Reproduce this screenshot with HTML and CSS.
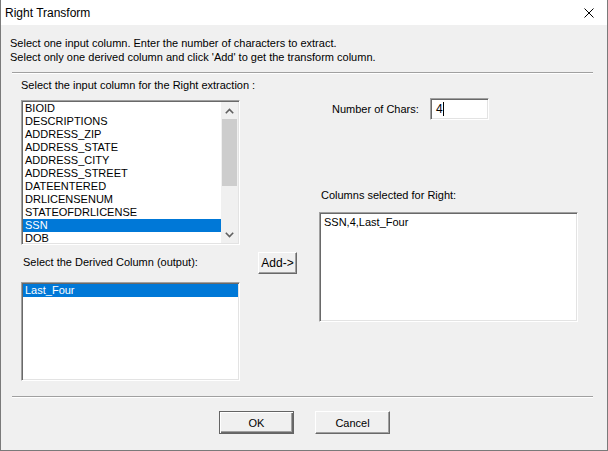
FILE: index.html
```html
<!DOCTYPE html>
<html>
<head>
<meta charset="utf-8">
<title>Right Transform</title>
<link rel="stylesheet" href="styles.css">
</head>
<body>
<div class="window">
  <div class="titlebar">
    <span class="title">Right Transform</span>
    <svg class="close" width="10" height="10" viewBox="0 0 10 10"><path d="M0.5 0.5L9.5 9.5M9.5 0.5L0.5 9.5" stroke="#000" stroke-width="1" fill="none"/></svg>
  </div>
  <div class="client">
    <div class="intro">
      <div>Select one input column. Enter the number of characters to extract.</div>
      <div>Select only one derived column and click 'Add' to get the transform column.</div>
    </div>
    <div class="sep"></div>
    <div class="main">
      <div class="col-left">
        <div class="label">Select the input column for the Right extraction :</div>
        <div class="listbox input-list">
          <ul class="items">
            <li>BIOID</li>
            <li>DESCRIPTIONS</li>
            <li>ADDRESS_ZIP</li>
            <li>ADDRESS_STATE</li>
            <li>ADDRESS_CITY</li>
            <li>ADDRESS_STREET</li>
            <li>DATEENTERED</li>
            <li>DRLICENSENUM</li>
            <li>STATEOFDRLICENSE</li>
            <li class="sel">SSN</li>
            <li>DOB</li>
          </ul>
          <div class="scrollbar">
            <div class="sb-btn"><svg width="9" height="6" viewBox="0 0 9 6"><path d="M0.8 5.2L4.5 1.5L8.2 5.2" stroke="#606060" stroke-width="1.6" fill="none"/></svg></div>
            <div class="sb-track"><div class="sb-thumb"></div></div>
            <div class="sb-btn"><svg width="9" height="6" viewBox="0 0 9 6"><path d="M0.8 0.8L4.5 4.5L8.2 0.8" stroke="#606060" stroke-width="1.6" fill="none"/></svg></div>
          </div>
        </div>
        <div class="label derived-label">Select the Derived Column (output):</div>
        <div class="listbox derived-list">
          <ul class="items">
            <li class="sel">Last_Four</li>
          </ul>
        </div>
      </div>
      <div class="col-mid">
        <button class="btn add">Add-&gt;</button>
      </div>
      <div class="col-right">
        <div class="chars-row">
          <span class="chars-label">Number of Chars:</span>
          <div class="textbox chars">4<span class="caret"></span></div>
        </div>
        <div class="label right-label">Columns selected for Right:</div>
        <div class="textbox result">SSN,4,Last_Four</div>
      </div>
    </div>
    <div class="sep"></div>
    <div class="buttons">
      <button class="btn default">OK</button>
      <button class="btn cancel">Cancel</button>
    </div>
  </div>
</div>
</body>
</html>
```
FILE: styles.css
```css
* { box-sizing: border-box; }
html, body { margin: 0; padding: 0; }
body {
  background: #ffffff;
  font-family: "Liberation Sans", Arial, sans-serif;
  font-size: 11px;
  color: #000;
}
.window {
  width: 608px;
  height: 451px;
  border: 1px solid #7a7a7a;
  border-top: none;
  display: flex;
  flex-direction: column;
}
.titlebar {
  height: 25px;
  background: #ffffff;
  display: flex;
  align-items: center;
  padding-left: 4px;
}
.title {
  font-size: 12px;
  flex: 1;
}
.close {
  margin-right: 13px;
}
.client {
  flex: 1;
  background: #f0f0f0;
}
.intro {
  padding: 11px 0 0 9px;
  line-height: 14px;
}
.sep {
  margin: 8px 14px 0 11px;
  height: 2px;
  border-top: 1px solid #a0a0a0;
  border-bottom: 1px solid #ffffff;
}
.main {
  display: flex;
  height: 314px;
  padding-left: 20px;
}
.col-left {
  width: 219px;
  padding-top: 4px;
}
.label {
  line-height: 14px;
  white-space: nowrap;
}
.listbox {
  background: #fff;
  border: 1px solid;
  border-color: #a0a0a0 #ffffff #ffffff #a0a0a0;
  padding: 1px;
  box-shadow: inset 1px 1px 0 #696969, inset -1px -1px 0 #e3e3e3;
}
.input-list {
  margin-top: 8px;
  height: 145px;
  display: flex;
}
.items {
  list-style: none;
  margin: 0;
  padding: 0;
  flex: 1;
  overflow: hidden;
}
.items li {
  height: 13px;
  line-height: 13px;
  padding-left: 2px;
  white-space: nowrap;
}
.items li.sel {
  background: #0078d7;
  color: #fff;
}
.scrollbar {
  width: 17px;
  background: #f0f0f0;
  display: flex;
  flex-direction: column;
}
.sb-btn {
  height: 17px;
  display: flex;
  align-items: center;
  justify-content: center;
}
.sb-track {
  flex: 1;
}
.sb-thumb {
  height: 67px;
  margin: 0 1px;
  background: #cdcdcd;
}
.derived-label {
  margin-top: 10px;
  padding-left: 2px;
}
.derived-list {
  margin-top: 13px;
  height: 99px;
}
.col-mid {
  width: 39px;
  margin-left: 18px;
  padding-top: 178px;
}
.btn {
  font-family: inherit;
  font-size: 11px;
  color: #000;
  background: #f0f0f0;
  border: 1px solid;
  border-color: #ffffff #696969 #696969 #ffffff;
  box-shadow: inset -1px -1px 0 #a0a0a0;
  padding: 0;
  margin: 0;
}
.add {
  width: 39px;
  height: 22px;
  font-size: 12px;
}
.col-right {
  width: 259px;
  margin-left: 22px;
}
.chars-row {
  margin-top: 24px;
  display: flex;
  align-items: center;
  padding-left: 13px;
}
.chars-label {
  width: 98px;
}
.textbox {
  background: #fff;
  border: 1px solid;
  border-color: #a0a0a0 #ffffff #ffffff #a0a0a0;
  box-shadow: inset 1px 1px 0 #696969, inset -1px -1px 0 #e3e3e3;
}
.chars {
  width: 59px;
  height: 22px;
  padding: 3px 5px;
  font-size: 12px;
  line-height: 14px;
  display: flex;
  align-items: center;
}
.caret {
  display: inline-block;
  width: 1px;
  height: 14px;
  background: #000;
  margin-left: 0;
}
.right-label {
  margin-top: 68px;
  padding-left: 2px;
}
.result {
  margin-top: 10px;
  height: 110px;
  padding: 3px 4px;
  line-height: 13px;
  font-size: 11px;
}
.buttons {
  display: flex;
  padding: 13px 0 0 218px;
}
.buttons .btn {
  width: 75px;
  height: 23px;
}
.default {
  border: 1px solid #646464;
  box-shadow: inset 1px 1px 0 #ffffff, inset -1px -1px 0 #696969, inset -2px -2px 0 #a0a0a0;
}
.cancel {
  margin-left: 21px;
}
```
